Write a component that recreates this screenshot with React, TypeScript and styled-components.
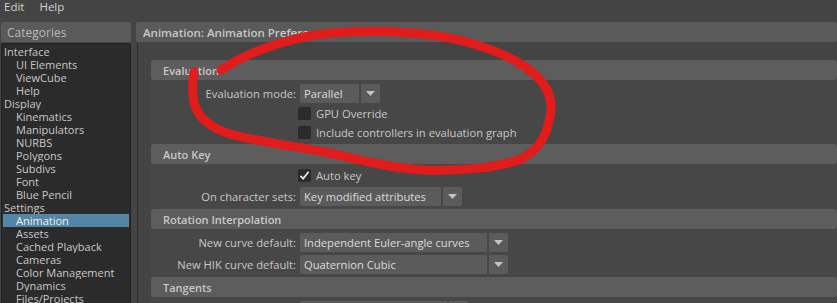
import React from 'react';
import styled, { createGlobalStyle } from 'styled-components';

const Global = createGlobalStyle`
  html, body { margin: 0; padding: 0; background: #444444; overflow: hidden; }
  body {
    font-family: "Open Sans", "Noto Sans", "DejaVu Sans", sans-serif;
    font-size: 11px;
    color: #c8c8c8;
  }
  #root { width: 837px; height: 303px; }
`;

const Window = styled.div`
  position: relative;
  width: 837px;
  height: 303px;
  overflow: hidden;
  background: #444444;
  display: flex;
  flex-direction: column;
`;

const MenuBar = styled.div`
  display: flex;
  gap: 15px;
  height: 20px;
  padding: 0 0 0 4px;
  line-height: 14px;
  font-size: 11.5px;
  color: #d2d2d2;
`;

const MenuItem = styled.span``;

const Body = styled.div`
  flex: 1;
  display: flex;
  gap: 5px;
  padding: 2px 0 0 1px;
  min-height: 0;
`;

const LeftPanel = styled.div`
  width: 130px;
  display: flex;
  flex-direction: column;
`;

const PanelHeader = styled.div<{ $bold?: boolean }>`
  height: 20px;
  flex: none;
  display: flex;
  align-items: center;
  padding-left: ${(p) => (p.$bold ? 7 : 6)}px;
  background: #5a5a5a;
  border-radius: 2px;
  font-size: ${(p) => (p.$bold ? 11.5 : 12)}px;
  font-weight: ${(p) => (p.$bold ? 600 : 400)};
  color: ${(p) => (p.$bold ? '#c8c8c8' : '#b8b8b8')};
  white-space: nowrap;
  overflow: hidden;
`;

const CategoryList = styled.div`
  flex: 1;
  margin-top: 1px;
  background: #2b2b2b;
  border: 1px solid #222222;
  border-radius: 2px 2px 0 0;
  padding-top: 1px;
`;

const CategoryItem = styled.div<{ $sub?: boolean; $active?: boolean }>`
  height: 13px;
  line-height: 13px;
  margin: 0 1px;
  padding-left: ${(p) => (p.$sub ? 13 : 1)}px;
  background: ${(p) => (p.$active ? '#5285a6' : 'transparent')};
  color: ${(p) => (p.$active ? '#f0f0f0' : '#c8c8c8')};
  font-size: 11px;
  white-space: nowrap;
  overflow: hidden;
`;

const RightPanel = styled.div`
  flex: 1;
  display: flex;
  flex-direction: column;
  min-width: 0;
`;

const ScrollArea = styled.div`
  flex: 1;
  margin: 1px 0 0 1px;
  border-left: 1px solid #2e2e2e;
  padding: 17px 0 0 13px;
  display: flex;
  flex-direction: column;
`;

const Section = styled.div`
  display: flex;
  flex-direction: column;
`;

const SectionHeader = styled.div`
  height: 20px;
  display: flex;
  align-items: center;
  padding-left: 12px;
  background: #5d5d5d;
  border-radius: 3px;
  font-size: 11px;
  font-weight: 600;
  color: #c8c8c8;
`;

const SectionBody = styled.div`
  padding: 2px 0;
  background: #474747;
  display: flex;
  flex-direction: column;
`;

const Row = styled.div<{ $tall?: boolean }>`
  display: grid;
  grid-template-columns: 147px 1fr;
  align-items: center;
  height: ${(p) => (p.$tall ? 22 : 19)}px;
`;

const Label = styled.div`
  text-align: right;
  padding-right: 2px;
  font-size: 11.2px;
  color: #c8c8c8;
  white-space: nowrap;
`;

const Control = styled.div`
  display: flex;
  align-items: center;
`;

const DropDown = styled.div`
  display: flex;
  gap: 2px;
  margin-left: 2px;
  height: 19px;
`;

const DropField = styled.div<{ $w: number }>`
  width: ${(p) => p.$w}px;
  background: #5b5b5b;
  border-radius: 2px 0 0 2px;
  padding-left: 4px;
  box-sizing: border-box;
  line-height: 19px;
  font-size: 11.2px;
  color: #dcdcdc;
  white-space: nowrap;
  overflow: hidden;
`;

const DropArrow = styled.div`
  width: 19px;
  background: #5b5b5b;
  border-radius: 0 2px 2px 0;
  display: flex;
  align-items: center;
  justify-content: center;
`;

const Box = styled.div`
  width: 13px;
  height: 13px;
  background: #2b2b2b;
  border-radius: 2px;
  display: flex;
  align-items: center;
  justify-content: center;
  flex: none;
`;

const CheckText = styled.span`
  margin-left: 5px;
  font-size: 11.2px;
  color: #c8c8c8;
  white-space: nowrap;
`;

const Overlay = styled.svg`
  position: absolute;
  left: 0;
  top: 0;
  pointer-events: none;
`;

const Arrow = () => (
  <svg width="9" height="5" viewBox="0 0 9 5">
    <path d="M0 0 H9 L4.5 5 Z" fill="#c4c4c4" />
  </svg>
);

const Select: React.FC<{ value: string; w: number }> = ({ value, w }) => (
  <DropDown>
    <DropField $w={w}>{value}</DropField>
    <DropArrow>
      <Arrow />
    </DropArrow>
  </DropDown>
);

const Check: React.FC<{ checked?: boolean; label: string }> = ({ checked, label }) => (
  <>
    <Box>
      {checked && (
        <svg width="11" height="11" viewBox="0 0 11 11">
          <path d="M1.5 5.8 L4.2 8.6 L9.6 1.8" stroke="#e6e6e6" strokeWidth="1.8" fill="none" />
        </svg>
      )}
    </Box>
    <CheckText>{label}</CheckText>
  </>
);

const categories: { name: string; sub?: boolean; active?: boolean }[] = [
  { name: 'Interface' },
  { name: 'UI Elements', sub: true },
  { name: 'ViewCube', sub: true },
  { name: 'Help', sub: true },
  { name: 'Display' },
  { name: 'Kinematics', sub: true },
  { name: 'Manipulators', sub: true },
  { name: 'NURBS', sub: true },
  { name: 'Polygons', sub: true },
  { name: 'Subdivs', sub: true },
  { name: 'Font', sub: true },
  { name: 'Blue Pencil', sub: true },
  { name: 'Settings' },
  { name: 'Animation', sub: true, active: true },
  { name: 'Assets', sub: true },
  { name: 'Cached Playback', sub: true },
  { name: 'Cameras', sub: true },
  { name: 'Color Management', sub: true },
  { name: 'Dynamics', sub: true },
  { name: 'Files/Projects', sub: true },
];

export default function App() {
  return (
    <Window>
      <Global />
      <MenuBar>
        <MenuItem>Edit</MenuItem>
        <MenuItem>Help</MenuItem>
      </MenuBar>
      <Body>
        <LeftPanel>
          <PanelHeader>Categories</PanelHeader>
          <CategoryList>
            {categories.map((c) => (
              <CategoryItem key={c.name} $sub={c.sub} $active={c.active}>
                {c.name}
              </CategoryItem>
            ))}
          </CategoryList>
        </LeftPanel>
        <RightPanel>
          <PanelHeader $bold>Animation: Animation Preferences</PanelHeader>
          <ScrollArea>
            <Section>
              <SectionHeader>Evaluation</SectionHeader>
              <SectionBody>
                <Row $tall>
                  <Label>Evaluation mode:</Label>
                  <Control>
                    <Select value="Parallel" w={59} />
                  </Control>
                </Row>
                <Row>
                  <Label />
                  <Control>
                    <Check label="GPU Override" />
                  </Control>
                </Row>
                <Row>
                  <Label />
                  <Control>
                    <Check label="Include controllers in evaluation graph" />
                  </Control>
                </Row>
              </SectionBody>
            </Section>
            <Section>
              <SectionHeader>Auto Key</SectionHeader>
              <SectionBody>
                <Row>
                  <Label />
                  <Control>
                    <Check checked label="Auto key" />
                  </Control>
                </Row>
                <Row $tall>
                  <Label>On character sets:</Label>
                  <Control>
                    <Select value="Key modified attributes" w={141} />
                  </Control>
                </Row>
              </SectionBody>
            </Section>
            <Section>
              <SectionHeader>Rotation Interpolation</SectionHeader>
              <SectionBody>
                <Row $tall>
                  <Label>New curve default:</Label>
                  <Control>
                    <Select value="Independent Euler-angle curves" w={187} />
                  </Control>
                </Row>
                <Row $tall>
                  <Label>New HIK curve default:</Label>
                  <Control>
                    <Select value="Quaternion Cubic" w={187} />
                  </Control>
                </Row>
              </SectionBody>
            </Section>
            <Section>
              <SectionHeader>Tangents</SectionHeader>
              <SectionBody>
                <Row $tall>
                  <Label />
                  <Control>
                    <Select value="" w={147} />
                  </Control>
                </Row>
              </SectionBody>
            </Section>
          </ScrollArea>
        </RightPanel>
      </Body>
      <Overlay width="837" height="303" viewBox="0 0 837 303">
        <path
          d="M 221 70 C 244 55, 282 38, 330 33 C 380 29, 440 32, 480 46 C 530 62, 553 85, 551 110 C 549 130, 541 148, 523 158 C 500 168, 460 171, 425 170 C 390 168, 360 160, 330 153 C 295 146, 260 142, 230 134 C 205 126, 194 112, 193 96 C 192 88, 193 78, 194 72"
          stroke="#e21b1b"
          strokeWidth="9"
          fill="none"
          strokeLinecap="round"
          strokeLinejoin="round"
        />
      </Overlay>
    </Window>
  );
}
